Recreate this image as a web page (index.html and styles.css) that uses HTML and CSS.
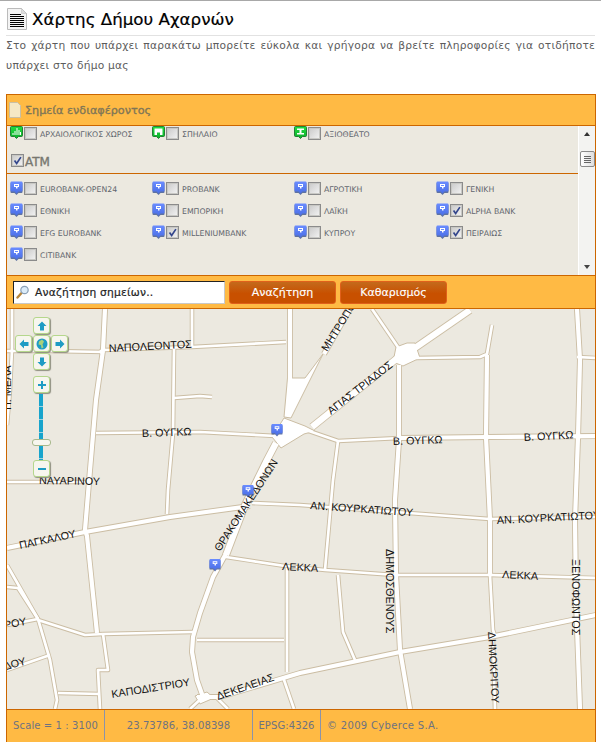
FILE: index.html
```html
<!DOCTYPE html>
<html lang="el">
<head>
<meta charset="utf-8">
<title>Χάρτης Δήμου Αχαρνών</title>
<link rel="stylesheet" href="styles.css">
</head>
<body>
<svg class="defs" width="0" height="0" aria-hidden="true">
  <defs>
    <linearGradient id="bluepin" x1="0" y1="0" x2="0" y2="1"><stop offset="0" stop-color="#6a8cff"/><stop offset="1" stop-color="#4a6ee6"/></linearGradient>
    <linearGradient id="greenpin" x1="0" y1="0" x2="0" y2="1"><stop offset="0" stop-color="#22dc40"/><stop offset="1" stop-color="#0cae2c"/></linearGradient>
    <symbol id="pin-bank" viewBox="0 0 13 14">
      <path d="M1.500 1h10a1 1 0 0 1 1 1v8.500a1 1 0 0 1-1 1H8.500L6.500 13.500 4.500 11.500H1.500a1 1 0 0 1-1-1V2a1 1 0 0 1 1-1z" fill="#2f4a8c" opacity=".75" transform="translate(0 .5)"/>
      <path d="M1.500 .5h10a1 1 0 0 1 1 1v8a1 1 0 0 1-1 1H8.500L6.500 12.500 4.500 10.500H1.500a1 1 0 0 1-1-1v-8a1 1 0 0 1 1-1z" fill="url(#bluepin)"/>
      <path d="M4 3h5v3H7.500v1.500H6V6H4z" fill="#fff"/>
      <path d="M5 4h3v1H5z" fill="#6a8cff"/>
    </symbol>
    <symbol id="pin-arch" viewBox="0 0 13 14">
      <path d="M1.500 .5h10a1 1 0 0 1 1 1v8a1 1 0 0 1-1 1H8.500L6.500 12.500 4.500 10.500H1.500a1 1 0 0 1-1-1v-8a1 1 0 0 1 1-1z" fill="url(#greenpin)" stroke="#0a6a1e" stroke-width=".8"/>
      <path d="M2.500 9V7h1v2zM4.500 9V5h1v4zM6.500 9V2h1v7zM8.500 9V4h1v5zM10 9V6h1v3z" fill="#fff"/>
    </symbol>
    <symbol id="pin-cave" viewBox="0 0 13 14">
      <path d="M1.500 .5h10a1 1 0 0 1 1 1v8a1 1 0 0 1-1 1H8.500L6.500 12.500 4.500 10.500H1.500a1 1 0 0 1-1-1v-8a1 1 0 0 1 1-1z" fill="url(#greenpin)" stroke="#0a6a1e" stroke-width=".8"/>
      <path d="M2.500 2.500h8v6.500H8V6.500H5V9H2.500z" fill="#fff"/>
    </symbol>
    <symbol id="pin-sight" viewBox="0 0 13 14">
      <path d="M1.500 .5h10a1 1 0 0 1 1 1v8a1 1 0 0 1-1 1H8.500L6.500 12.500 4.500 10.500H1.500a1 1 0 0 1-1-1v-8a1 1 0 0 1 1-1z" fill="url(#greenpin)" stroke="#0a6a1e" stroke-width=".8"/>
      <path d="M3 2.500h7v1.500H7.500v3H10v1.500H3V7h2.500V4H3z" fill="#fff"/>
    </symbol>
    <symbol id="check" viewBox="0 0 13 13">
      <path d="M3 6.500l2.500 3.500L10.500 2.500" fill="none" stroke="#33468c" stroke-width="2"/>
    </symbol>
    <g id="roads-thin" fill="none">
      <path d="M12 309L12 350L10 390L7 425"/>
      <path d="M7 351L50 351L104 352"/>
      <path d="M192 309L192 346"/>
      <path d="M104 350L192 347L286 342"/>
      <path d="M174 398L200 396L212 397"/>
      <path d="M372 309L400 350"/>
      <path d="M416 358L480 357L487 354L492 325"/>
      <path d="M7 482L85 482"/>
      <path d="M174 349L173 433L168 490L167 514"/>
      <path d="M96 433L200 432L276 436"/>
      <path d="M306 430L338 441L400 438"/>
      <path d="M338 441L333 480L325 570"/>
      <path d="M226 557L285 566L325 570L395 575L490 575L596 578"/>
      <path d="M287 568L287 672"/>
      <path d="M197 640L284 640"/>
      <path d="M103 634L193 632"/>
      <path d="M338 575L343 632L355 660"/>
      <path d="M7 565L38 619L50 660L57 700L55 709"/>
      <path d="M7 587L18 588L38 619"/>
      <path d="M38 620L85 635L103 634"/>
      <path d="M7 625L38 619"/>
      <path d="M7 670L50 655"/>
      <path d="M58 693L100 694"/>
      <path d="M103 634L108 670L98 670L100 709"/>
      <path d="M577 357L596 358"/>
      <path d="M490 575L493 630L495 636"/>
      <path d="M493 640L495 709"/>
      <path d="M252 503L300 505L395 512L490 519L596 517"/>
      <path d="M283 677L294 709"/>
      <path d="M216 697L228 709"/>
      <path d="M205 695L190 709"/>
    </g>
    <g id="roads-mid" fill="none">
      <path d="M105 309L103 350L96 400L90 470L85 530L87 536L97 633"/>
      <path d="M7 548L85 532L170 517L250 506"/>
      <path d="M399 365L399 440L395 500L396 575L400 650L410 709"/>
      <path d="M487 355L486 437L490 520L490 575"/>
      <path d="M577 309L580 360L578 437L575 520L576 600L580 709"/>
      <path d="M400 438L487 437L600 436"/>
      <path d="M197 697L220 697L300 673L400 652L490 637L596 615"/>
      <path d="M290 309L290 385"/>
      <path d="M350 309L324 354"/>
      <path d="M100 352L104 351"/>
      <path d="M228 550L213 577L200 613L193 637L192 652L197 680L203 697"/>
    </g>
    <g id="roads-wide" fill="none">
      <path d="M312 427L400 356"/>
      <path d="M412 350L470 310"/>
      <path d="M276 443L266 462L245 505L226 555"/>
    </g>
    <g id="roads-poly">
      <path d="M287.500 378L305 378L323 354L291 418L284 417Z"/>
      <path d="M284 418L305 426L315 431L304 434L281 448L272 437Z"/>
      <path d="M396 347L407 343L415 343L420 358L403 366L393 362Z"/>
      <path d="M195 696L207 692L214 698L200 704Z"/>
    </g>
  </defs>
</svg>

<header class="title">
  <svg class="title-icon" viewBox="0 0 20 22" width="20" height="22" aria-hidden="true">
    <path d="M.5.500h14l5 5v16H.5z" fill="#f4f4f4" stroke="#bbb"/>
    <path d="M14.500.500v5h5z" fill="#ddd" stroke="#bbb" stroke-width=".5"/>
    <path d="M3 6.500h11M3 8.500h14M3 10.500h14M3 12.500h14M3 14.500h14M3 16.500h14M3 18.500h14" stroke="#000" fill="none"/>
  </svg>
  <h1 class="title-text">Χάρτης Δήμου Αχαρνών</h1>
</header>
<p class="intro">Στο χάρτη που υπάρχει παρακάτω μπορείτε εύκολα και γρήγορα να βρείτε πληροφορίες για οτιδήποτε υπάρχει στο δήμο μας</p>

<section class="panel">
  <div class="panel-head">
    <svg class="panel-icon" viewBox="0 0 12 16" width="12" height="16" aria-hidden="true">
      <path d="M.5.500h8l3 3v12H.5z" fill="#f5e8c4" stroke="#c9bfa4"/>
    </svg>
    <span>Σημεία ενδιαφέροντος</span>
  </div>

  <div class="picker">
    <div class="list">
      <div class="grid">
        <label class="item"><svg class="pin"><use href="#pin-arch"/></svg><span class="cb"></span><span class="lbl">ΑΡΧΑΙΟΛΟΓΙΚΟΣ ΧΩΡΟΣ</span></label>
        <label class="item"><svg class="pin"><use href="#pin-cave"/></svg><span class="cb"></span><span class="lbl">ΣΠΗΛΑΙΟ</span></label>
        <label class="item"><svg class="pin"><use href="#pin-sight"/></svg><span class="cb"></span><span class="lbl">ΑΞΙΟΘΕΑΤΟ</span></label>
      </div>
      <div class="cat">
        <span class="cb"><svg class="tick"><use href="#check"/></svg></span>
        <span class="cat-name">ATM</span>
      </div>
      <div class="grid grid-atm">
        <label class="item"><svg class="pin"><use href="#pin-bank"/></svg><span class="cb"></span><span class="lbl">EUROBANK-OPEN24</span></label>
        <label class="item"><svg class="pin"><use href="#pin-bank"/></svg><span class="cb"></span><span class="lbl">PROBANK</span></label>
        <label class="item"><svg class="pin"><use href="#pin-bank"/></svg><span class="cb"></span><span class="lbl">ΑΓΡΟΤΙΚΗ</span></label>
        <label class="item"><svg class="pin"><use href="#pin-bank"/></svg><span class="cb"></span><span class="lbl">ΓΕΝΙΚΗ</span></label>
        <label class="item"><svg class="pin"><use href="#pin-bank"/></svg><span class="cb"></span><span class="lbl">ΕΘΝΙΚΗ</span></label>
        <label class="item"><svg class="pin"><use href="#pin-bank"/></svg><span class="cb"></span><span class="lbl">ΕΜΠΟΡΙΚΗ</span></label>
        <label class="item"><svg class="pin"><use href="#pin-bank"/></svg><span class="cb"></span><span class="lbl">ΛΑΪΚΗ</span></label>
        <label class="item"><svg class="pin"><use href="#pin-bank"/></svg><span class="cb"><svg class="tick"><use href="#check"/></svg></span><span class="lbl">ALPHA BANK</span></label>
        <label class="item"><svg class="pin"><use href="#pin-bank"/></svg><span class="cb"></span><span class="lbl">EFG EUROBANK</span></label>
        <label class="item"><svg class="pin"><use href="#pin-bank"/></svg><span class="cb"><svg class="tick"><use href="#check"/></svg></span><span class="lbl">MILLENIUMBANK</span></label>
        <label class="item"><svg class="pin"><use href="#pin-bank"/></svg><span class="cb"></span><span class="lbl">ΚΥΠΡΟΥ</span></label>
        <label class="item"><svg class="pin"><use href="#pin-bank"/></svg><span class="cb"><svg class="tick"><use href="#check"/></svg></span><span class="lbl">ΠΕΙΡΑΙΩΣ</span></label>
        <label class="item"><svg class="pin"><use href="#pin-bank"/></svg><span class="cb"></span><span class="lbl">CITIBANK</span></label>
      </div>
    </div>
    <div class="scroll" aria-hidden="true">
      <span class="arrow-up"></span>
      <span class="thumb"><i></i><i></i><i></i><i></i></span>
      <span class="arrow-down"></span>
    </div>
  </div>

  <div class="search">
    <div class="search-box">
      <svg class="lens" viewBox="0 0 14 14" width="14" height="14" aria-hidden="true">
        <path d="M5.500 8L1.500 12.500" stroke="#b8863a" stroke-width="2.400" stroke-linecap="round"/>
        <circle cx="8.500" cy="5" r="3.700" fill="#dcecf8" stroke="#8a9fb5" stroke-width="1.200"/>
      </svg>
      <span>Αναζήτηση σημείων..</span>
    </div>
    <button class="btn">Αναζήτηση</button>
    <button class="btn">Καθαρισμός</button>
  </div>

  <div class="map">
    <svg class="map-svg" viewBox="7 309 589 400" width="589" height="400">
      <use href="#roads-thin" class="case thin"/>
      <use href="#roads-mid" class="case mid"/>
      <use href="#roads-wide" class="case wide"/>
      <use href="#roads-poly" class="case-poly"/>
      <use href="#roads-thin" class="road thin"/>
      <use href="#roads-mid" class="road mid"/>
      <use href="#roads-wide" class="road wide"/>
      <g class="labels">
        <text transform="translate(109 352) rotate(-3)">ΝΑΠΟΛΕΟΝΤΟΣ</text>
        <text transform="translate(142 437) rotate(-2)">Β. ΟΥΓΚΩ</text>
        <text transform="translate(393 445) rotate(-2)">Β. ΟΥΓΚΩ</text>
        <text transform="translate(524 441) rotate(-3)">Β. ΟΥΓΚΩ</text>
        <text transform="translate(327 352) rotate(-58)">ΜΗΤΡΟΠΟΛΕΩΣ</text>
        <text transform="translate(331 415) rotate(-38)">ΑΓΙΑΣ ΤΡΙΑΔΟΣ</text>
        <text transform="translate(39 484) rotate(1)">ΝΑΥΑΡΙΝΟΥ</text>
        <text transform="translate(220 552) rotate(-57)">ΘΡΑΚΟΜΑΚΕΔΟΝΩΝ</text>
        <text transform="translate(310 509) rotate(4)">ΑΝ. ΚΟΥΡΚΑΤΙΩΤΟΥ</text>
        <text transform="translate(497 524) rotate(-3)">ΑΝ. ΚΟΥΡΚΑΤΙΩΤΟΥ</text>
        <text transform="translate(20 549) rotate(-12)">ΠΑΓΚΑΛΟΥ</text>
        <text transform="translate(282 570) rotate(3)">ΛΕΚΚΑ</text>
        <text transform="translate(502 578) rotate(3)">ΛΕΚΚΑ</text>
        <text transform="translate(386 549) rotate(90)">ΔΗΜΟΣΘΕΝΟΥΣ</text>
        <text transform="translate(572 559) rotate(90)">ΞΕΝΟΦΩΝΤΟΣ</text>
        <text transform="translate(488 632) rotate(87)">ΔΗΜΟΚΡΙΤΟΥ</text>
        <text transform="translate(112 698) rotate(-9)">ΚΑΠΟΔΙΣΤΡΙΟΥ</text>
        <text transform="translate(218 700) rotate(-19)">ΔΕΚΕΛΕΙΑΣ</text>
        <text transform="translate(-3 630) rotate(-10)">ΠΡΟΥ</text>
        <text transform="translate(-2 672) rotate(-15)">ΑΔΟΥ</text>
        <text transform="translate(11 410) rotate(-90)">Π. ΜΕΛΑ</text>
      </g>
      <svg class="map-pin" x="271" y="423" width="12" height="14"><use href="#pin-bank"/></svg>
      <svg class="map-pin" x="242" y="484" width="12" height="14"><use href="#pin-bank"/></svg>
      <svg class="map-pin" x="209" y="558" width="12" height="14"><use href="#pin-bank"/></svg>
    </svg>

    <div class="nav" aria-hidden="true">
      <span class="ctl n-up"><svg viewBox="0 0 12 12"><path d="M6 1.500L10.500 6H8v4.500H4V6H1.500z"/></svg></span>
      <span class="ctl n-left"><svg viewBox="0 0 12 12"><path d="M1.500 6L6 1.500V4h4.500v4H6v2.500z"/></svg></span>
      <span class="ctl n-home"><svg viewBox="0 0 12 12"><circle cx="6" cy="6" r="5.500" fill="#1f9cc4"/><path d="M3 3.500l3-2 2 2-1.500 3 1 3-2 1-.5-3.500-2.500-.5z" fill="#a9d07c"/></svg></span>
      <span class="ctl n-right"><svg viewBox="0 0 12 12"><path d="M10.500 6L6 10.500V8H1.500V4H6V1.500z"/></svg></span>
      <span class="ctl n-down"><svg viewBox="0 0 12 12"><path d="M6 10.500L1.500 6H4V1.500h4V6h2.500z"/></svg></span>
      <span class="ctl n-plus"><svg viewBox="0 0 12 12"><path d="M5 2h2v3h3v2H7v3H5V7H2V5h3z"/></svg></span>
      <span class="track"></span>
      <span class="slider"></span>
      <span class="ctl n-minus"><svg viewBox="0 0 12 12"><path d="M2 5h8v2H2z"/></svg></span>
    </div>
  </div>

  <footer class="foot">
    <span class="f-scale">Scale = 1 : 3100</span>
    <span class="f-coord">23.73786, 38.08398</span>
    <span class="f-epsg">EPSG:4326</span>
    <span class="f-copy">© 2009 Cyberce S.A.</span>
  </footer>
</section>
</body>
</html>
```

FILE: styles.css
```css
* { box-sizing: border-box; }
html, body { margin: 0; padding: 0; }
body {
  width: 601px;
  height: 742px;
  overflow: hidden;
  border-top: 1px solid #a8a8a8;
  background: #fff;
  font-family: "DejaVu Sans", Verdana, sans-serif;
}
.defs { display: block; height: 0; }

.title {
  display: flex;
  align-items: center;
  gap: 5px;
  height: 35px;
  margin: 0 6px;
  padding: 1px 0 0 1px;
  border-bottom: 1px solid #e2e2e2;
}
.title-icon { flex: none; }
.title-text {
  margin: 0;
  font-size: 16.700px;
  font-weight: 400;
  color: #000;
  -webkit-text-stroke: .2px #000;
}
.intro {
  margin: 0 6px 18px;
  font-size: 10.700px;
  line-height: 20px;
  color: #5c5c5c;
  text-align: justify;
  letter-spacing: .2px;
}

.panel {
  width: 590px;
  margin-left: 6px;
  border: solid #cc6600;
  border-width: 1px 1px 0;
}
.panel-head {
  display: flex;
  align-items: center;
  gap: 4px;
  height: 31px;
  padding: 0 0 0 2px;
  background: #ffba44;
  border-bottom: 1px solid #cc6600;
  font-size: 11.200px;
  font-weight: 400;
  color: #7f7656;
  -webkit-text-stroke: .35px #7f7656;
}
.panel-icon { flex: none; }

.picker {
  display: flex;
  height: 149px;
  background: #ece9e0;
}
.list { flex: 1; overflow: hidden; }
.grid {
  display: grid;
  grid-template-columns: repeat(4, 142px);
  grid-auto-rows: 22px;
  padding-left: 3px;
}
.grid-atm { padding-top: 7px; }
.item { display: flex; align-items: flex-start; }
.pin { flex: none; width: 13px; height: 14px; }
.cb {
  flex: none;
  display: block;
  width: 13px;
  height: 13px;
  margin: 1px 0 0 1px;
  border: 1px solid #8b8b8b;
  outline: 1px solid #c8c8c4;
  outline-offset: -2px;
  background: linear-gradient(135deg, #c9c9c9, #f4f4f4);
}
.tick { display: block; width: 11px; height: 11px; }
.lbl {
  margin-left: 3px;
  font-size: 7.750px;
  line-height: 17px;
  color: #62666e;
  white-space: nowrap;
}
.cat {
  display: flex;
  align-items: flex-end;
  height: 26px;
  padding: 0 0 4px 4px;
  border-bottom: 1px solid #cc6600;
}
.cat .cb { margin: 0 0 2px; }
.cat-name {
  font-size: 12px;
  font-weight: 400;
  line-height: 13px;
  color: #77776f;
  -webkit-text-stroke: .35px #77776f;
  margin-left: 1px;
}

.scroll {
  flex: none;
  width: 17px;
  display: flex;
  flex-direction: column;
  align-items: center;
  background: #f3f3f1;
  border-left: 1px solid #fff;
}
.arrow-up, .arrow-down {
  width: 0;
  height: 0;
  border: 3.500px solid transparent;
}
.arrow-up { border-bottom: 4px solid #333; margin-top: 3px; }
.arrow-down { border-top: 4px solid #444; margin-top: auto; margin-bottom: 3px; }
.thumb {
  display: flex;
  flex-direction: column;
  justify-content: center;
  gap: 1px;
  width: 15px;
  height: 16px;
  margin-top: 15px;
  padding: 0 3px;
  border: 1px solid #8a8a8a;
  border-radius: 2px;
  background: linear-gradient(90deg, #fff, #dedede);
}
.thumb i { display: block; height: 1px; background: #666; }

.search {
  display: flex;
  align-items: center;
  height: 34px;
  padding: 0 0 0 6px;
  background: #ffba44;
  border: solid #cc6600;
  border-width: 1px 0;
}
.search-box {
  display: flex;
  align-items: center;
  gap: 5px;
  width: 212px;
  height: 23px;
  padding-left: 2px;
  background: #fff;
  border: 1px solid;
  border-color: #222 #c8c8c8 #c8c8c8 #222;
  font-size: 10.700px;
  font-weight: 400;
  letter-spacing: .2px;
  color: #222;
  -webkit-text-stroke: .2px #222;
}
.lens { flex: none; }
.btn {
  width: 107px;
  height: 23px;
  margin: 0 0 0 4px;
  padding: 0;
  border: 1px solid #e0601a;
  border-radius: 3px;
  background: linear-gradient(#c46a1c, #c85000 55%);
  color: #fff;
  font: 400 11px "DejaVu Sans", Verdana, sans-serif;
  -webkit-text-stroke: .15px #fff;
}

.map { position: relative; height: 400px; background: #ece9e0; overflow: hidden; }
.map-svg { display: block; }
.case, .road { stroke-linejoin: round; stroke-linecap: butt; }
.case { stroke: #cbbda3; }
.road { stroke: #fff; }
.case.thin { stroke-width: 4.500px; }
.road.thin { stroke-width: 2.700px; }
.case.mid { stroke-width: 6px; }
.road.mid { stroke-width: 4.200px; }
.case.wide { stroke-width: 8px; }
.road.wide { stroke-width: 6.200px; }
.case-poly { fill: #fff; stroke: #cbbda3; stroke-width: 1px; }
.labels text {
  font-family: "Liberation Sans", Arial, sans-serif;
  font-size: 10.800px;
  fill: #111;
}

.nav { position: absolute; left: 0; top: 0; }
.ctl {
  position: absolute;
  display: flex;
  align-items: center;
  justify-content: center;
  width: 17px;
  height: 17px;
  border: 1px solid #b5d78c;
  border-radius: 3px;
  background: #f7f6ee;
  box-shadow: 1px 1px 1px #8f8f80;
}
.ctl svg { display: block; width: 12px; height: 12px; fill: #1f9cc4; }
.n-up { left: 26px; top: 8px; }
.n-left { left: 8px; top: 26px; }
.n-home { left: 26px; top: 26px; }
.n-right { left: 44px; top: 26px; }
.n-down { left: 26px; top: 44px; }
.n-plus { left: 26px; top: 67px; }
.n-minus { left: 26px; top: 151px; }
.track {
  position: absolute;
  left: 32px;
  top: 85px;
  width: 4px;
  height: 67px;
  background: repeating-linear-gradient(#18a4cc 0 12px, #9fd2e0 12px 13px);
}
.slider {
  position: absolute;
  left: 25px;
  top: 130px;
  width: 19px;
  height: 7px;
  border: 1px solid #a7b98c;
  border-radius: 3px;
  background: #f7f6ee;
}

.foot {
  display: flex;
  align-items: stretch;
  height: 33px;
  padding-bottom: 2px;
  background: #ffba44;
  border-top: 1px solid #cc6600;
  font-size: 10px;
  letter-spacing: .1px;
  color: #6e7280;
  white-space: nowrap;
}
.foot span {
  display: flex;
  align-items: center;
  justify-content: center;
  border-right: 1px solid #8b93a8;
}
.f-scale { width: 98px; }
.f-coord { width: 148px; }
.f-epsg { width: 68px; }
.foot .f-copy { border-right: 0; padding-left: 6px; letter-spacing: .32px; }
```
